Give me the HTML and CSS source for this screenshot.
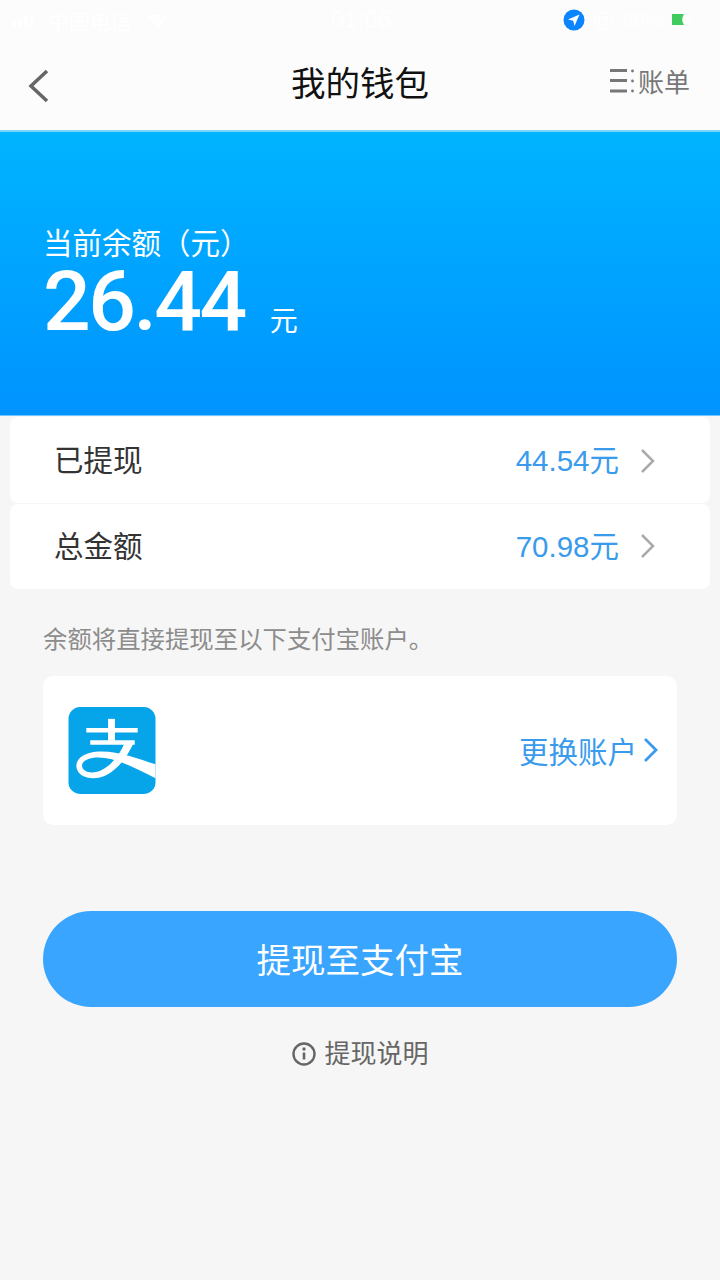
FILE: index.html
```html
<!DOCTYPE html>
<html lang="zh">
<head>
<meta charset="utf-8">
<title>我的钱包</title>
<link rel="stylesheet" href="styles.css">
</head>
<body>
<div class="phone">
  <header class="top">
    <div class="status">
      <div class="status-left">
        <svg class="signal" width="24" height="14" viewBox="0 0 24 14"><rect x="0" y="9" width="4" height="5"/><rect x="6" y="6" width="4" height="8"/><rect x="12" y="3" width="4" height="11"/><rect x="18" y="0" width="4" height="14" opacity=".5"/></svg>
        <span>中国电信</span>
        <svg class="wifi" width="20" height="14" viewBox="0 0 20 14"><path d="M1 5q9-6 18 0M4 8q6-4 12 0M10 13l3-3q-3-2-6 0z" fill="none" stroke="#fff" stroke-width="2"/></svg>
      </div>
      <span class="time">01:06</span>
      <div class="status-right">
        <svg class="loc" width="22" height="22" viewBox="0 0 22 22"><circle cx="11" cy="11" r="10.5" fill="#0a84ff"/><path d="M16.5 5.500L5 10.500l5.200 1.300 1.300 5.200z" fill="#fff"/></svg>
        <span class="st-alarm">@</span>
        <span>68%</span>
        <svg class="batt" width="20" height="14" viewBox="0 0 20 14"><path d="M0 1h12q-3.500 5.500 0 11H0z" fill="#3fcb5e"/><path d="M16 0l-2 7h3l-1 6 4-8h-3z" fill="#fff"/></svg>
      </div>
    </div>
    <nav class="nav">
      <svg class="back" width="24" height="36" viewBox="0 0 24 36"><path d="M20 3L4 18l16 15" fill="none" stroke="#666" stroke-width="3.500"/></svg>
      <h1 class="title">我的钱包</h1>
      <div class="bill">
        <svg width="24" height="26" viewBox="0 0 24 26"><path d="M0 2.500h17M0 12.500h17M0 23h17" stroke="#777" stroke-width="3"/><circle cx="22.500" cy="3" r="1.400" fill="#777"/><circle cx="22.500" cy="13" r="1.400" fill="#777"/><circle cx="22.500" cy="23" r="1.400" fill="#777"/></svg>
        <span class="bill-text">账单</span>
      </div>
    </nav>
  </header>

  <section class="hero">
    <div class="hero-label">当前余额（元）</div>
    <div class="hero-amount"><span class="num">26.44</span><span class="unit">元</span></div>
  </section>

  <div class="rows">
    <div class="row">
      <span class="row-label">已提现</span>
      <span class="row-val">44.54元</span>
      <svg class="chev" width="16" height="26" viewBox="0 0 16 26"><path d="M2 2l11 11L2 24" fill="none" stroke="#aaa" stroke-width="2.500"/></svg>
    </div>
    <div class="row">
      <span class="row-label">总金额</span>
      <span class="row-val">70.98元</span>
      <svg class="chev" width="16" height="26" viewBox="0 0 16 26"><path d="M2 2l11 11L2 24" fill="none" stroke="#aaa" stroke-width="2.500"/></svg>
    </div>
  </div>

  <main class="content">
    <p class="hint">余额将直接提现至以下支付宝账户。</p>
    <div class="account">
      <svg class="alipay" width="88" height="87" viewBox="0 0 88 88">
        <rect width="88" height="88" rx="12" fill="#06a5ea"/>
        <path d="M18 23.500h52M22 36h45" fill="none" stroke="#fff" stroke-width="4.500"/>
        <path d="M43.500 12v24" fill="none" stroke="#fff" stroke-width="7"/>
        <path d="M88 58C70 52 50 44 30 45C12 46 5 56 9 64C13 73 28 74 38 69C50 63 60 50 66 36L57 36C52 48 44 58 35 63C26 68 16 67 14 61C12 55 20 51 30 51C48 51 68 62 88 72Z" fill="#fff"/>
      </svg>
      <div class="change">
        <span>更换账户</span>
        <svg width="16" height="26" viewBox="0 0 16 26"><path d="M2 2l11 11L2 24" fill="none" stroke="#3a9bec" stroke-width="2.800"/></svg>
      </div>
    </div>
    <button class="cta">提现至支付宝</button>
    <div class="help">
      <svg width="24" height="24" viewBox="0 0 24 24"><circle cx="12" cy="12" r="10.500" fill="none" stroke="#666" stroke-width="2.400"/><path d="M12 10.500v7" stroke="#666" stroke-width="2.600"/><circle cx="12" cy="7" r="1.700" fill="#666"/></svg>
      <span>提现说明</span>
    </div>
  </main>
</div>
</body>
</html>
```
FILE: styles.css
```css
* { box-sizing: border-box; margin: 0; padding: 0; }
html, body { background: #f6f6f6; }
body { font-family: "Liberation Sans", "Noto Sans CJK SC", sans-serif; }
.phone { width: 720px; height: 1280px; overflow: hidden; display: flex; flex-direction: column; }

.top { height: 132px; background: #fcfcfc; border-bottom: 2px solid #7dd3f8; flex: none; }
.status { height: 40px; display: flex; align-items: center; justify-content: space-between; padding: 0 28px 0 12px; color: #fff; font-size: 21px; position: relative; }
.status-left, .status-right { display: flex; align-items: center; gap: 12px; }
.status-right { gap: 8px; }
.time { position: absolute; left: 331px; top: 6px; font-size: 24px; }
.signal { fill: #fff; }
.wifi { margin-left: 4px; }

.nav { height: 90px; display: flex; align-items: center; justify-content: space-between; padding: 0 30px 0 27px; position: relative; }
.back { margin-top: 2px; }
.title { position: absolute; left: 0; right: 0; top: 21px; text-align: center; font-size: 34.500px; line-height: 46px; font-weight: 400; color: #111; pointer-events: none; }
.bill { display: flex; align-items: center; gap: 4px; font-size: 26px; color: #777; margin-top: -8px; }
.bill svg { display: block; }
.bill-text { margin-top: -2px; }

.hero { height: 284px; flex: none; background: linear-gradient(180deg, #00b4ff 0%, #0093ff 100%); border-bottom: 1px solid #6fc6fd; color: #fff; padding: 93px 0 0 43px; }
.hero-label { font-size: 29.500px; line-height: 38px; }
.hero-amount { display: flex; align-items: flex-end; margin-top: 2px; height: 74px; }
.num { font-family: Roboto, "Liberation Sans", sans-serif; font-size: 84px; line-height: 74px; font-weight: 500; letter-spacing: -2.500px; }
.unit { font-size: 28px; line-height: 34px; margin-left: 25px; margin-bottom: 0; }

.rows { flex: none; margin: 1px 10px 0; display: flex; flex-direction: column; gap: 1px; }
.row { height: 86px; background: #fff; border-radius: 8px; display: flex; align-items: center; padding: 0 54px 0 44px; }
.row + .row { height: 85px; padding-bottom: 2px; }
.row-label { font-size: 29.500px; color: #333; flex: 1; margin-top: -4px; }
.row-val { font-size: 29.500px; color: #3a9bec; margin-right: 21px; margin-top: -4px; }
.chev { margin-top: 1px; }

.content { flex: 1; padding: 0 43px; }
.hint { font-size: 24.400px; line-height: 34px; color: #8c8c8c; margin-top: 34px; }
.account { margin-top: 19px; height: 149px; background: #fff; border-radius: 10px; display: flex; align-items: center; justify-content: space-between; padding: 0 18px 0 25px; }
.alipay { margin-top: 0; }
.change { display: flex; align-items: center; gap: 6px; font-size: 29.500px; color: #3a9bec; margin-top: -2px; }
.cta { display: block; width: 100%; height: 96px; margin-top: 86px; border: none; border-radius: 48px; background: #3aa5ff; color: #fff; font: inherit; font-size: 34.500px; padding-bottom: 2px; }
.help { margin-top: 29px; display: flex; align-items: center; justify-content: center; gap: 8px; font-size: 26px; line-height: 36px; color: #666; padding-left: 1px; }
```
